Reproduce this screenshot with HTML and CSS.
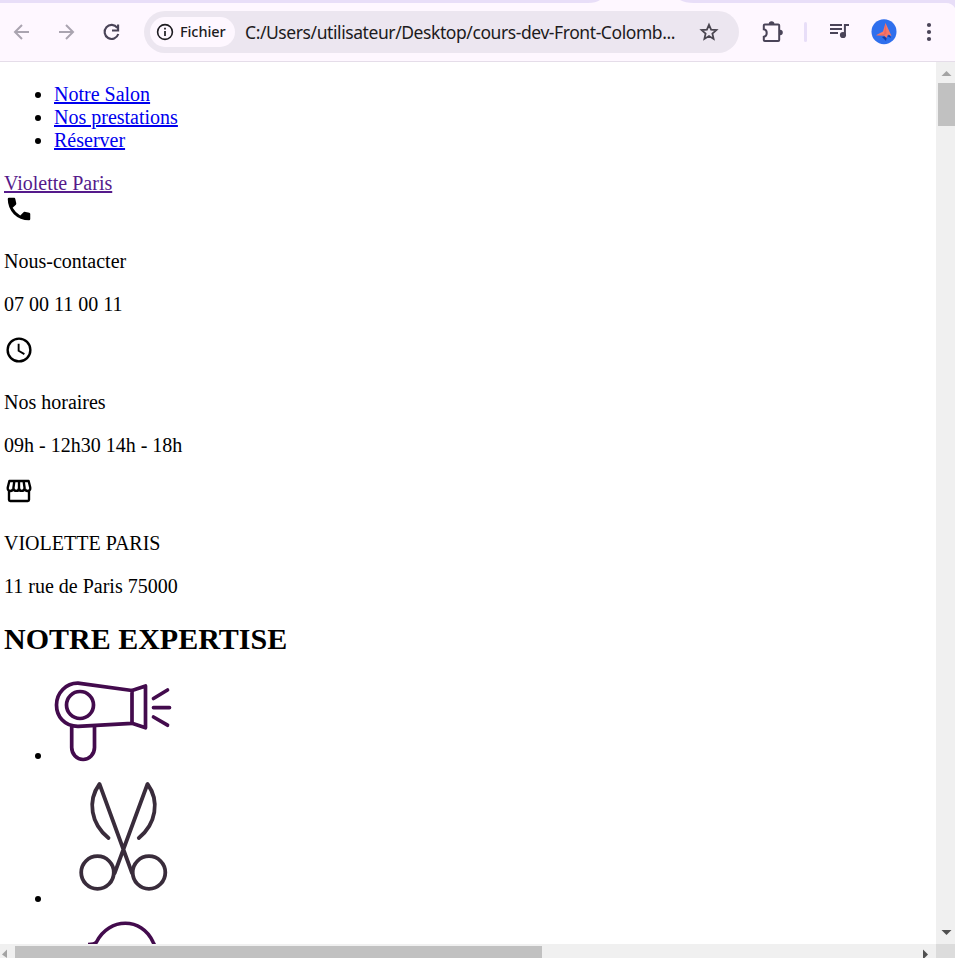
FILE: index.html
```html
<!DOCTYPE html>
<html lang="fr">
<head>
<meta charset="utf-8">
<title>Violette Paris</title>
<link rel="stylesheet" href="styles.css">
</head>
<body>
<div class="window">
  <header class="toolbar">
    <svg class="tabs" width="955" height="12" viewBox="0 0 955 12"><path d="M0 0H600Q596 3 588 3H0zM680 0H955V8Q952 3 946 3H694Q685 3 680 0z" fill="#e8def8"/></svg>
    <svg class="nav back" width="24" height="24" viewBox="0 0 24 24"><path d="M21 12H7M14 5L7 12L14 19" fill="none" stroke="#aaa4b0" stroke-width="2"/></svg>
    <svg class="nav forward" width="24" height="24" viewBox="0 0 24 24"><path d="M3 12H17M10 5L17 12L10 19" fill="none" stroke="#aaa4b0" stroke-width="2"/></svg>
    <svg class="nav reload" width="24" height="24" viewBox="0 0 24 24"><path d="M17.3 7.8A7 7 0 1 0 18.3 14M18.1 4.5V10.5H12" fill="none" stroke="#4a4458" stroke-width="2.1"/></svg>
    <div class="omnibox">
      <div class="chip">
        <svg width="18" height="18" viewBox="0 0 18 18"><circle cx="9" cy="9" r="7.4" fill="none" stroke="#1d1b20" stroke-width="1.6"/><path d="M9 8V13M9 4.8V6.5" stroke="#1d1b20" stroke-width="1.7"/></svg>
        <span>Fichier</span>
      </div>
      <span class="url">C:/Users/utilisateur/Desktop/cours-dev-Front-Colomb...</span>
      <svg class="star" width="20" height="20" viewBox="0 0 20 20"><path d="M10 2.8L12.1 7.7L17.4 8.1L13.4 11.6L14.6 16.9L10 14.1L5.4 16.9L6.6 11.6L2.6 8.1L7.9 7.7z" fill="none" stroke="#49454f" stroke-width="1.8"/></svg>
    </div>
    <svg class="puzzle" width="24" height="24" viewBox="0 0 24 24"><path d="M4.8 4.5H18.2Q19.2 4.5 19.2 5.5V20Q19.2 21 18.2 21H4.8Q3.8 21 3.8 20V16.8C7.7 16.2 7.7 9.8 3.8 9.3V5.5Q3.8 4.5 4.8 4.5z" fill="none" stroke="#4a4458" stroke-width="2"/><path d="M8.8 4a2.8 2.8 0 0 1 5.6 0zM20 9.7a2.8 2.8 0 0 1 0 5.6z" fill="#4a4458"/></svg>
    <span class="separator"></span>
    <svg class="media" width="22" height="20" viewBox="0 0 22 20"><path d="M1 3H13M1 7H13M1 11H9" stroke="#4a4458" stroke-width="2"/><path d="M14.9 13V2H20V4.1H16.9V13z" fill="#4a4458"/><circle cx="14" cy="13" r="3.1" fill="#4a4458"/></svg>
    <svg class="avatar" width="26" height="26" viewBox="0 0 26 26"><circle cx="13" cy="12.7" r="12.5" fill="#2f6fed"/><path d="M11 18L15 22L16 17L20 19L19 16z" fill="#173ea5"/><path d="M14.5 4L20.5 17L17 15.5L15.5 19L13 16.5L5 16.2L12 12.5z" fill="#f87868"/><path d="M14.5 4L15.5 14.5L13 16.5L5 16.2L13 15z" fill="#ee6862"/></svg>
    <svg class="more" width="6" height="20" viewBox="0 0 6 20"><circle cx="3" cy="3" r="2.1" fill="#4a4458"/><circle cx="3" cy="10" r="2.1" fill="#4a4458"/><circle cx="3" cy="17" r="2.1" fill="#4a4458"/></svg>
  </header>
  <div class="viewport">
    <main class="page">
      <ul>
        <li><a href="#salon">Notre Salon</a></li>
        <li><a href="#prestations">Nos prestations</a></li>
        <li><a href="#reserver">Réserver</a></li>
      </ul>
      <a class="brand" href="#">Violette Paris</a>
      <div class="icon"><svg width="30" height="30" viewBox="0 0 24 24"><path d="M4 3H8.2Q8.8 3 9 3.7L9.8 7.4Q9.9 8.1 9.5 8.5L6.9 11Q9.2 15 13 17.1L15.6 14.5Q16 14.1 16.5 14.2L20.2 15Q21 15.2 21 15.9V20Q21 21 20 21Q12.8 20.9 7.9 16.1Q3.1 11.2 3 4Q3 3 4 3z"/></svg></div>
      <p>Nous-contacter</p>
      <p>07 00 11 00 11</p>
      <div class="icon"><svg width="30" height="30" viewBox="0 0 24 24"><circle cx="12" cy="12" r="9.1" fill="none" stroke="#000" stroke-width="1.9"/><path d="M11.7 7V12.6L16.3 15.3" fill="none" stroke="#000" stroke-width="1.5"/></svg></div>
      <p>Nos horaires</p>
      <p>09h - 12h30 14h - 18h</p>
      <div class="icon"><svg width="30" height="30" viewBox="0 0 24 24"><path d="M4 11.5V19Q4 20 5 20H19Q20 20 20 19V11.5M4.3 4H19.7L21 9.2C21.6 12.8 17 12.8 16.5 9.8C16 12.6 12.3 12.6 12 9.8C11.7 12.6 8 12.6 7.5 9.8C7 12.8 2.4 12.8 3 9.2zM8.3 4L7.5 9.8M12 4V9.8M15.7 4L16.5 9.8" fill="none" stroke="#000" stroke-width="1.9" stroke-linejoin="round"/></svg></div>
      <p>VIOLETTE PARIS</p>
      <p>11 rue de Paris 75000</p>
      <h2>NOTRE EXPERTISE</h2>
      <ul class="skills">
        <li><svg width="125" height="81" viewBox="54 681 125 81"><g fill="none" stroke="#430b4d" stroke-width="3.7" stroke-linecap="round" stroke-linejoin="round"><path d="M78 683.2L132 690.5V723.3L78 726.3C64 726.3 56.5 716 56.5 705C56.5 693 66 683 78 683.2z"/><circle cx="80" cy="705" r="13.5"/><path d="M132 690.5L145.5 686V727.8L132 723.3M71.7 727V747.5A11.4 12 0 0 0 94.5 747.5V726M153.5 698.5L167.5 690M153.5 707.6H169.5M153.5 717L167.5 725.2"/></g></svg></li>
        <li><svg width="139" height="138" viewBox="54 767 139 138"><g fill="none" stroke="#392c3b" stroke-width="3.8" stroke-linecap="round" stroke-linejoin="round"><path d="M108.5 838C91 824 87 801 99.5 784L132 873M138.8 838C156 824 160 801 147.5 784L114.7 873"/><circle cx="97.5" cy="872.5" r="16.3"/><circle cx="149" cy="872.5" r="16.3"/></g></svg></li>
        <li><svg width="139" height="139" viewBox="54 910 139 139"><path d="M88 944.5Q95 944.5 96.5 942C109 917 142 917 153 942L156 948" fill="none" stroke="#430b4d" stroke-width="3.6"/></svg></li>
      </ul>
    </main>
    <div class="vscroll">
      <svg width="19" height="20" viewBox="0 0 19 20"><path d="M5.5 14L10.5 9L15.5 14z" fill="#a3a3a3"/></svg>
      <span class="vthumb"></span>
      <svg class="down" width="19" height="20" viewBox="0 0 19 20"><path d="M5.5 6H15.5L10.5 11z" fill="#505050"/></svg>
    </div>
    <div class="hscroll">
      <svg width="15" height="14" viewBox="0 0 15 14"><path d="M7 5.5V14L2 10.5z" fill="#a3a3a3"/></svg>
      <span class="hthumb"></span>
      <svg class="right" width="15" height="14" viewBox="0 0 15 14"><path d="M2 5.5L7 10.5L3.5 14H2z" fill="#505050"/></svg>
    </div>
    <div class="corner"></div>
  </div>
</div>
</body>
</html>
```
FILE: styles.css
```css
* { box-sizing: border-box; }
body { margin: 0; overflow: hidden; background: #fff; }
svg { flex: none; }
.window { display: flex; flex-direction: column; width: 955px; height: 958px; overflow: hidden; }

.toolbar { position: relative; display: flex; align-items: center; flex: none; height: 62px; padding-top: 2px; background: #fef7ff; border-bottom: 1px solid #e5dde9; }
.tabs { position: absolute; top: 0; left: 0; }
.back { margin-left: 8px; }
.forward { margin-left: 24px; }
.reload { margin-left: 20px; }
.omnibox { display: flex; align-items: center; width: 595px; height: 42px; margin-left: 20px; padding: 0 20px 0 6px; border-radius: 21px; background: #ece6f0; }
.chip { display: flex; align-items: center; gap: 6px; flex: none; width: 85px; height: 30px; padding-left: 6px; border-radius: 15px; background: #fef7ff; color: #1d1b20; font: 500 14.5px/20px "Noto Sans", sans-serif; letter-spacing: -0.1px; }
.chip span { padding-bottom: 1px; }
.url { flex: none; width: 434px; margin-left: 10px; color: #1d1b20; font: 17.5px "Noto Sans", sans-serif; letter-spacing: -0.42px; white-space: nowrap; }
.star { margin-left: 20px; }
.puzzle { margin-left: 21px; }
.separator { width: 3px; height: 20px; margin-left: 20px; border-radius: 2px; background: #e8def8; }
.media { margin-left: 22px; }
.avatar { margin-left: 20px; }
.more { margin-left: 29px; }

.viewport { display: grid; grid-template-columns: 936px 19px; grid-template-rows: 882px 14px; }
.page { overflow: hidden; padding: 1px 4px 0; color: #000; font: 20px/23px "Liberation Serif", serif; }
.page ul { margin: 20px 0; padding-left: 50px; }
.page p { margin: 20px 0; }
.page a { color: #0000ee; text-decoration-thickness: 2px; }
.page .brand { display: block; width: max-content; color: #551a8b; }
.icon { display: flow-root; height: 35px; }
.icon svg { display: block; margin-top: -1px; }
.page h2 { margin: 24px 0 25px; font-size: 30px; line-height: 34px; }
.page .skills { margin: 0; }

.vscroll { display: flex; flex-direction: column; background: #f0f0f0; }
.vthumb { width: 17px; height: 43px; margin: 1px 0 0 2px; background: #c1c1c1; }
.down { margin-top: auto; }
.hscroll { display: flex; background: #f0f0f0; }
.hthumb { width: 527px; height: 12px; margin-top: 2px; background: #c1c1c1; }
.right { margin-left: auto; }
.corner { background: #dcdcdc; }
```
